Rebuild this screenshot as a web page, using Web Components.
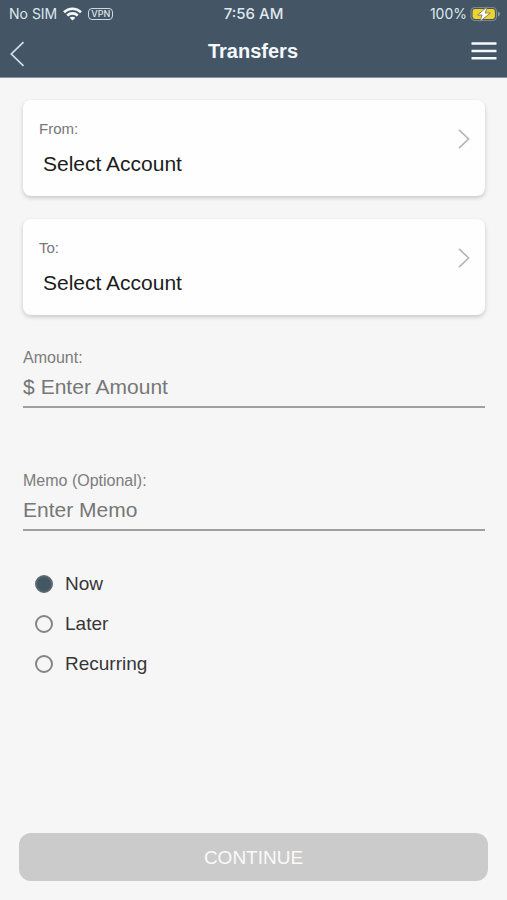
<!DOCTYPE html>
<html lang="en">
<head>
<meta charset="utf-8">
<meta name="viewport" content="width=device-width, initial-scale=1">
<title>Transfers</title>
<style>
  html { height: 100%; }
  body {
    margin: 0;
    min-height: 100%;
    display: flex;
    background: #f6f6f6;
    font-family: "Liberation Sans", Arial, Helvetica, sans-serif;
  }
</style>
</head>
<body>
<transfer-screen></transfer-screen>

<script>
  class BaseElement extends HTMLElement {
    render(html) {
      this.attachShadow({ mode: "open" }).innerHTML = html;
    }
  }

  customElements.define("status-bar", class extends BaseElement {
    connectedCallback() {
      this.render(`
        <style>
          :host {
            display: grid; grid-template-columns: 1fr auto 1fr; align-items: center;
            height: 28px; padding: 0 7px; box-sizing: border-box;
            font: 400 14px/20px Inter, "Liberation Sans", sans-serif; color: #dfe7ed;
          }
          div { display: flex; align-items: center; }
          .left { gap: 6px; padding-left: 2px; }
          .right { gap: 3px; justify-content: flex-end; }
          .time { font-weight: 500; font-size: 15px; }
          .vpn {
            font-size: 9px; line-height: 10px; font-weight: 500;
            border: 1px solid #cdd8e0; border-radius: 4px; padding: 0 2px;
          }
          svg { display: block; }
        </style>
        <div class="left">
          <span>No SIM</span>
          <svg width="19" height="14" viewBox="0 0 19 14" fill="none" stroke="#f4f8fa" stroke-width="2.6" aria-label="Wi-Fi">
            <path d="M1 5.2C5.8.6 13.2.6 18 5.2M4.2 8.5c3-2.8 7.6-2.8 10.6 0"/>
            <path d="M9.5 13.6 6.6 10.8c1.6-1.4 4.2-1.4 5.8 0Z" fill="#f4f8fa" stroke="none"/>
          </svg>
          <span class="vpn">VPN</span>
        </div>
        <div class="time">7:56 AM</div>
        <div class="right">
          <span>100%</span>
          <svg width="30" height="16" viewBox="0 0 30 16" aria-label="Battery charging">
            <rect x="1" y="1.5" width="25.5" height="13" rx="4" fill="#445565" stroke="#7d898f" stroke-width="1.2"/>
            <rect x="2.6" y="3.1" width="22.3" height="9.8" rx="2.4" fill="#f0d22c"/>
            <path d="M28 5.6q2 .6 2 2.4t-2 2.4Z" fill="#8c979c"/>
            <path d="M17.4.6 7.6 9h4.6L9.8 15.6 20.4 7h-5.2Z" fill="#fff" stroke="#6d7058" stroke-width=".8"/>
          </svg>
        </div>`);
    }
  });

  customElements.define("nav-bar", class extends BaseElement {
    connectedCallback() {
      this.render(`
        <style>
          :host {
            display: grid; grid-template-columns: 1fr auto 1fr; align-items: center;
            height: 49px; padding: 0 10px 0 9px; box-sizing: border-box; color: #f3f8fc;
          }
          h1 { margin: 0; padding-bottom: 4px; font-size: 20px; line-height: 24px; font-weight: 700; }
          button { padding: 0; border: 0; background: none; color: inherit; cursor: pointer; }
          .menu { justify-self: end; padding-bottom: 4px; }
          .back { justify-self: start; padding-top: 2px; }
          svg { display: block; }
        </style>
        <button class="back" aria-label="Back">
          <svg width="16" height="26" viewBox="0 0 16 26" fill="none" stroke="#d3e0e9" stroke-width="1.7"><path d="M14.5 1.2 2.3 13l12.2 11.8"/></svg>
        </button>
        <h1><slot></slot></h1>
        <button class="menu" aria-label="Menu">
          <svg width="26" height="20" viewBox="0 0 26 20" stroke="#f3f8fc" stroke-width="2.4"><path d="M.5 2.5h25M.5 10h25M.5 17.3h25"/></svg>
        </button>`);
    }
  });

  customElements.define("account-picker", class extends BaseElement {
    connectedCallback() {
      this.render(`
        <style>
          :host { display: block; }
          button {
            display: flex; justify-content: space-between; align-items: flex-start;
            width: 100%; padding: 19px 14px 19px 16px; border: 0; border-radius: 8px;
            background: #fefefe; box-shadow: 0 2px 4px rgba(0,0,0,.19);
            font-family: inherit; text-align: left; cursor: pointer;
          }
          .text { display: flex; flex-direction: column; gap: 12px; }
          .label { font-size: 15px; line-height: 20px; color: #777; }
          .value { font-size: 21px; line-height: 26px; color: #1c1c1c; padding-left: 4px; }
          svg { display: block; margin-top: 9px; }
        </style>
        <button type="button">
          <span class="text">
            <span class="label"><slot></slot></span>
            <span class="value">Select Account</span>
          </span>
          <svg width="14" height="22" viewBox="0 0 14 22" fill="none" stroke="#b5b5b5" stroke-width="1.6"><path d="m2 1.8 9.6 9.2L2 20.2"/></svg>
        </button>`);
    }
  });

  customElements.define("text-field", class extends BaseElement {
    connectedCallback() {
      const prefix = this.getAttribute("prefix");
      this.render(`
        <style>
          :host { display: block; }
          label { display: block; font-size: 16px; line-height: 20px; color: #7c7c7c; }
          .row {
            display: flex; align-items: center; gap: 6px; padding: 5px 0;
            border-bottom: 2px solid #a0a0a0; font-size: 21px; line-height: 28px; color: #737373;
          }
          input {
            flex: 1; min-width: 0; height: 28px; padding: 0; border: 0; outline: 0;
            background: none; font: inherit; color: #333;
          }
          input::placeholder { color: #777; opacity: 1; }
        </style>
        <label for="field"><slot></slot></label>
        <div class="row">
          ${prefix ? `<span>${prefix}</span>` : ""}
          <input id="field" type="text" placeholder="${this.getAttribute("placeholder")}">
        </div>`);
    }
  });

  customElements.define("schedule-options", class extends BaseElement {
    connectedCallback() {
      const options = ["Now", "Later", "Recurring"];
      this.render(`
        <style>
          :host { display: block; }
          fieldset { margin: 0; padding: 0; border: 0; display: flex; flex-direction: column; gap: 16px; }
          label { display: flex; align-items: center; gap: 12px; font-size: 19px; line-height: 24px; color: #363636; }
          input {
            appearance: none; box-sizing: border-box; width: 18px; height: 18px; margin: 0;
            border: 2px solid #858585; border-radius: 50%;
          }
          input:checked { border-color: #5b6872; background: #445765; }
        </style>
        <fieldset aria-label="Schedule">
          ${options.map((name, i) => `<label><input type="radio" name="when" ${i ? "" : "checked"}>${name}</label>`).join("")}
        </fieldset>`);
    }
  });

  customElements.define("action-button", class extends BaseElement {
    connectedCallback() {
      this.render(`
        <style>
          :host { display: block; }
          button {
            width: 100%; padding: 13px 12px 11px; border: 0; border-radius: 12px;
            background: #cbcbcb; color: #fafafa; font: 19px/24px "Liberation Sans", Arial, sans-serif;
          }
        </style>
        <button type="button" disabled><slot></slot></button>`);
    }
  });

  customElements.define("transfer-screen", class extends BaseElement {
    connectedCallback() {
      this.render(`
        <style>
          :host { flex: 1; min-width: 0; display: flex; flex-direction: column; }
          header { background: #445565; border-bottom: 1px solid #87939c; }
          main { flex: 1; display: flex; flex-direction: column; padding: 22px 22px 0 23px; }
          .accounts { display: flex; flex-direction: column; gap: 23px; }
          .fields { display: flex; flex-direction: column; gap: 63px; margin-top: 33px; }
          schedule-options { margin: 41px 0 24px 12px; }
          footer { padding: 0 19px 19px; }
        </style>
        <header>
          <status-bar></status-bar>
          <nav-bar>Transfers</nav-bar>
        </header>
        <main>
          <div class="accounts">
            <account-picker>From:</account-picker>
            <account-picker>To:</account-picker>
          </div>
          <div class="fields">
            <text-field prefix="$" placeholder="Enter Amount">Amount:</text-field>
            <text-field placeholder="Enter Memo">Memo (Optional):</text-field>
          </div>
          <schedule-options></schedule-options>
        </main>
        <footer><action-button>CONTINUE</action-button></footer>`);
    }
  });
</script>
</body>
</html>
